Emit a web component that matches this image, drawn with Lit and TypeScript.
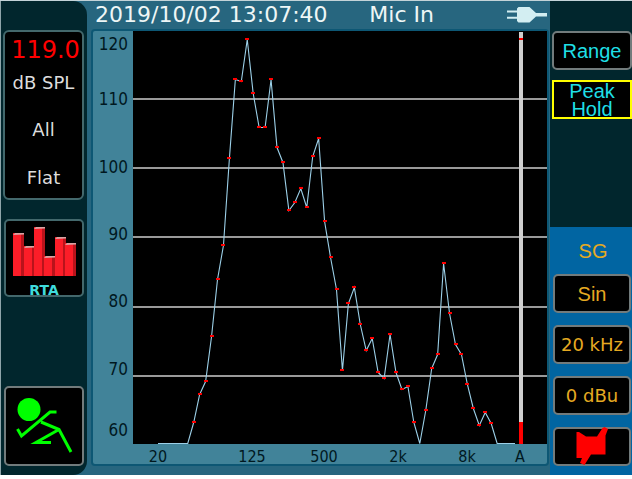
import { LitElement, html, svg, css } from "lit";
import { customElement } from "lit/decorators.js";

// Plot space: 414 x 413 units, the vertical range spanning 60 to 120 dB.
const FIRST_X = 25;
const STEP_X = 5.95;
const FLOOR = 412;
const TRACE = [
  412, 412, 412, 412, 412, 412, 391, 363, 350, 305, 248, 214, 127, 48, 50, 8,
  62, 96, 96, 48, 116, 131, 179, 171, 157, 176, 125, 107, 190, 226, 258, 339,
  272, 256, 293, 319, 307, 341, 347, 303, 341, 358, 355, 391, 412, 379, 337,
  323, 232, 282, 313, 323, 353, 377, 394, 381, 392, 412, 412, 412, 412,
];
const GRID = [68, 137, 206, 276, 345];
const LEVELS = ["120", "110", "100", "90", "80", "70", "60"];
const BANDS = ["20", "125", "500", "2k", "8k", "A"];

@customElement("spectrum-chart")
class SpectrumChart extends LitElement {
  static styles = css`
    :host {
      display: grid;
      grid-template-columns: 40px 1fr;
      border: 2px solid #0d5774;
      border-radius: 4px;
      background: #418399;
      color: #00181f;
      font-family: "DejaVu Sans Condensed", "DejaVu Sans", sans-serif;
      font-stretch: condensed;
      line-height: 20px;
    }
    .levels {
      display: grid;
      grid-template-rows: 13fr 55fr 68fr 67fr 67fr 68fr 61fr 14fr;
      font-size: 17px;
      padding-right: 5px;
    }
    .levels span {
      align-self: end;
      display: flex;
      align-items: center;
      justify-content: flex-end;
      height: 0;
    }
    .plot {
      display: block;
      width: 100%;
      aspect-ratio: 414 / 413;
      background: #000;
    }
    .bands {
      grid-column: 2;
      display: grid;
      grid-template-columns: 25fr 94fr 72fr 74fr 69fr 53fr 27fr;
      height: 20px;
      line-height: 26px;
      font-size: 16px;
    }
    .bands span {
      justify-self: end;
      display: flex;
      justify-content: center;
      width: 0;
    }
    .grid {
      fill: #999;
    }
    .trace {
      fill: none;
      stroke: #9cd0e8;
      stroke-width: 1.1;
    }
    .mark,
    .level {
      fill: #f00;
    }
    .bar {
      fill: #cfcfcf;
    }
  `;

  render() {
    const points = TRACE.map((y, i) => [FIRST_X + i * STEP_X, y]);
    return html`
      <div class="levels">${LEVELS.map((l) => html`<span>${l}</span>`)}</div>
      <svg class="plot" viewBox="0 0 414 413" preserveAspectRatio="none" role="img" aria-label="Spectrum">
        ${GRID.map((y) => svg`<rect class="grid" x="0" y=${y - 1} width="414" height="2"/>`)}
        <polyline class="trace" points=${points.map(([x, y]) => `${x},${y + 0.5}`).join(" ")} />
        ${points
          .filter(([, y]) => y < FLOOR)
          .map(([x, y]) => svg`<rect class="mark" x=${Math.round(x) - 2} y=${y - 1} width="4" height="2"/>`)}
        <rect class="bar" x="386" y="1" width="4" height="412" />
        <rect class="mark" x="386" y="7" width="4" height="2" />
        <rect class="level" x="386" y="391" width="4" height="22" />
      </svg>
      <div class="bands">${BANDS.map((b) => html`<span>${b}</span>`)}</div>
    `;
  }
}

const RTA_BARS = [
  [0, 6],
  [11, 19],
  [21, 0],
  [31, 29],
  [42, 10],
  [52, 16],
];

@customElement("app-root")
class AppRoot extends LitElement {
  static styles = css`
    :host {
      display: block;
      background: #fff;
      font-family: "DejaVu Sans", sans-serif;
    }
    .device {
      display: grid;
      grid-template-columns: 91px 1fr 82px;
      background: #27667f;
      border-top: 1px solid #c3d3d8;
    }
    button {
      display: flex;
      align-items: center;
      justify-content: center;
      box-sizing: border-box;
      margin: 0;
      padding: 0;
      border: 2px solid #727b7c;
      border-radius: 5px;
      background: #000;
      color: inherit;
      font: inherit;
    }
    .left {
      display: flex;
      flex-direction: column;
      margin-right: 4px;
      padding: 29px 3px 9px 3px;
      border-left: 1px solid #8fa5aa;
      border-radius: 0 14px 14px 0;
      background: #01262d;
    }
    .readout {
      box-sizing: border-box;
      height: 170px;
      margin-left: -1px;
      border: 2px solid #43686c;
      border-radius: 6px;
      background: #000;
      color: #ddd;
      font-size: 18px;
      line-height: 48px;
      text-align: center;
      padding-top: 2px;
    }
    .spl {
      color: #f00;
      font-size: 24px;
      line-height: 32px;
      padding-left: 4px;
    }
    .unit {
      line-height: 34px;
      margin-bottom: 6px;
    }
    .rta {
      flex-direction: column;
      justify-content: flex-start;
      height: 78px;
      margin-top: 19px;
      padding-top: 6px;
      overflow: hidden;
      border-color: #43686c;
      color: #3fdcdc;
      font-size: 14px;
      font-weight: bold;
      line-height: 16px;
    }
    .rta svg {
      flex: none;
      margin-bottom: 6px;
    }
    .run {
      height: 80px;
      margin-top: auto;
    }
    header {
      display: grid;
      grid-template-columns: 279fr 140fr 40px;
      height: 28px;
      padding: 0 2px 0 4px;
      color: #eef6f6;
      font-size: 22px;
      line-height: 28px;
      white-space: nowrap;
    }
    header svg {
      align-self: center;
    }
    .main {
      padding: 0 1px 9px 0;
    }
    .right {
      display: flex;
      flex-direction: column;
      background: #01262d;
      font-family: "Liberation Sans", Arial, sans-serif;
      font-size: 20px;
      line-height: 18px;
    }
    .top {
      display: flex;
      flex-direction: column;
      gap: 10px;
      flex: 1;
      padding: 30px 0 0 2px;
      color: #1fdfe6;
    }
    .top button,
    .generator button {
      height: 39px;
    }
    .top .on {
      border: 2px solid #ff0;
      border-radius: 0;
    }
    .generator {
      display: flex;
      flex-direction: column;
      gap: 12px;
      padding: 13px 1px 9px 3px;
      background: #0165a2;
      color: #e6aa22;
    }
    .generator h2 {
      margin: 0;
      font-size: 20px;
      font-weight: normal;
      line-height: 22px;
      text-align: center;
      padding-left: 2px;
    }
    .generator .value {
      font-family: "DejaVu Sans", sans-serif;
      font-size: 18px;
      white-space: nowrap;
    }
    .generator svg {
      flex: none;
    }
  `;

  render() {
    return html`
      <div class="device">
        <aside class="left">
          <div class="readout">
            <div class="spl">119.0</div>
            <div class="unit">dB SPL</div>
            <div>All</div>
            <div>Flat</div>
          </div>
          <button class="rta">
            <svg width="63" height="49" viewBox="0 0 63 49" aria-hidden="true">
              ${RTA_BARS.map(
                ([x, y]) => svg`
                  <rect x=${x} y=${y} width="11" height=${49 - y} fill="#fc1d28"/>
                  <rect x=${x + 8} y=${y + 1} width="3" height=${48 - y} fill="#b9131b"/>
                  <path d="M${x} ${y + 2}l2-2h9v1.5z" fill="#d9a3a3"/>`
              )}
            </svg>
            RTA
          </button>
          <button class="run" aria-label="Run">
            <svg width="58" height="56" viewBox="0 0 58 56">
              <circle cx="14" cy="11.500" r="11.5" fill="#0f0" />
              <path
                d="M2.500 31L6.500 38L35 14H41.500M26 24L44 31.500L56 54M44 31.500L21 44.500H36"
                fill="none" stroke="#0f0" stroke-width="3" />
            </svg>
          </button>
        </aside>
        <section class="main">
          <header>
            <time datetime="2019-10-02T13:07:40">2019/10/02 13:07:40</time>
            <span>Mic In</span>
            <svg width="40" height="18" viewBox="0 0 40 18" role="img" aria-label="External power">
              <path
                d="M0 4.5H10V2.5L11.5 1H22.5L29 7H40V10.500H29L22.500 16.500H11.500L10 15V12.800H0V10.800H10V6.500H0Z"
                fill="#d3eef2" />
            </svg>
          </header>
          <spectrum-chart></spectrum-chart>
        </section>
        <aside class="right">
          <div class="top">
            <button>Range</button>
            <button class="on">Peak<br />Hold</button>
          </div>
          <div class="generator">
            <h2>SG</h2>
            <button>Sin</button>
            <button class="value">20 kHz</button>
            <button class="value">0 dBu</button>
            <button aria-label="Mute">
              <svg width="32" height="39" viewBox="0 0 32 39">
                <path
                  d="M0.500 5H3L10 9.500H21L26.500 1L28.500 0L32 2L29.500 8.500V27.500H15L8.500 38L4 36L6 31H0.500Z"
                  fill="#f00" />
              </svg>
            </button>
          </div>
        </aside>
      </div>
    `;
  }
}
